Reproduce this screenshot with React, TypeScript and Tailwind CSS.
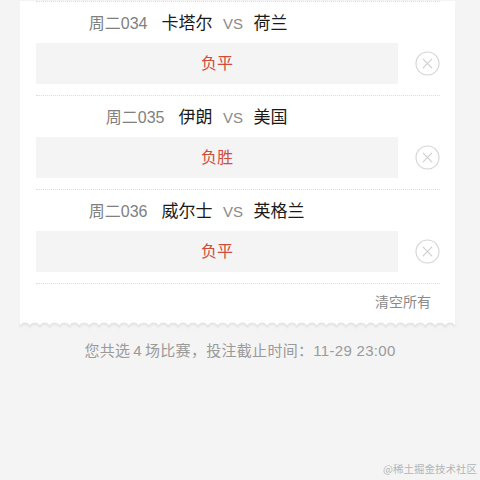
import React from "react";

type Pick = { code: string; home: string; away: string; choice: string };

const picks: Pick[] = [
  { code: "周二034", home: "卡塔尔", away: "荷兰", choice: "负平" },
  { code: "周二035", home: "伊朗", away: "美国", choice: "负胜" },
  { code: "周二036", home: "威尔士", away: "英格兰", choice: "负平" },
];

const font = { fontFamily: '"Liberation Sans", "Noto Sans CJK SC", sans-serif' };

function RemoveIcon() {
  return (
    <svg width="25" height="25" viewBox="0 0 25 25" fill="none">
      <circle cx="12.5" cy="12.5" r="11.5" stroke="#d4d4d4" strokeWidth="1.1" />
      <path d="M8.2 8.2 L16.8 16.8 M16.8 8.2 L8.2 16.8" stroke="#cfcfcf" strokeWidth="1.2" strokeLinecap="round" />
    </svg>
  );
}

function ScallopEdge() {
  const w = 435;
  const n = 44;
  const step = w / n;
  let arcs = "";
  for (let i = 0; i < n; i++) {
    arcs += ` A${step / 2} 4 0 0 1 ${((i + 1) * step).toFixed(2)} 6`;
  }
  const fillPath = `M0 0 L0 6${arcs} L${w} 0 Z`;
  const strokePath = `M0 6${arcs}`;
  return (
    <svg
      width={w}
      height="9"
      viewBox={`0 0 ${w} 9`}
      className="block drop-shadow-[0_1px_1px_rgba(0,0,0,0.08)]"
    >
      <path d={fillPath} fill="#ffffff" />
      <path d={strokePath} fill="none" stroke="#e2e2e2" strokeWidth="1" />
    </svg>
  );
}

function PickRow({ p }: { p: Pick }) {
  return (
    <div className="border-t border-dotted border-[#dcdcdc] pb-[11px]">
      <div className="flex h-[41px] items-center pt-[3px] pr-[10px]">
        <div className="flex flex-1 items-center justify-end">
          <span className="text-[16px] text-[#808080]">{p.code}</span>
          <span className="ml-[14px] text-[17px] text-[#1a1a1a]">{p.home}</span>
        </div>
        <span className="mx-[10px] w-[21px] text-center text-[15px] text-[#8a8a8a]">VS</span>
        <div className="flex flex-1 items-center">
          <span className="text-[17px] text-[#1a1a1a]">{p.away}</span>
        </div>
      </div>
      <div className="flex items-center">
        <div className="flex h-[41px] w-[362px] items-center justify-center bg-[#f4f4f4]">
          <span className="text-[16px] text-[#cf4d3d]">{p.choice}</span>
        </div>
        <div className="ml-[17px] flex">
          <RemoveIcon />
        </div>
      </div>
    </div>
  );
}

export default function App() {
  return (
    <div className="relative h-[480px] w-[480px] overflow-hidden bg-[#f4f4f4]" style={font}>
      <div className="ml-[20px] w-[435px] pt-[1px]">
        <div className="bg-white px-[15px] pl-[16px]">
          {picks.map((p) => (
            <PickRow key={p.code} p={p} />
          ))}
          <div className="flex h-[38px] items-center justify-end border-t border-dotted border-[#dcdcdc] pr-[9px]">
            <span className="text-[14px] text-[#8a8a8a]">清空所有</span>
          </div>
        </div>
        <ScallopEdge />
      </div>
      <div className="mt-[10px] text-center text-[15px] tracking-[0.3px] text-[#9a9a9a]">
        您共选<span className="mx-[3px]">4</span>场比赛，投注截止时间：11-29 23:00
      </div>
      <div
        className="absolute bottom-[3px] right-[3px] text-[10.5px] text-[#b5b5b5]"
        style={{ fontFamily: '"Noto Sans CJK SC", sans-serif' }}
      >
        @稀土掘金技术社区
      </div>
    </div>
  );
}
